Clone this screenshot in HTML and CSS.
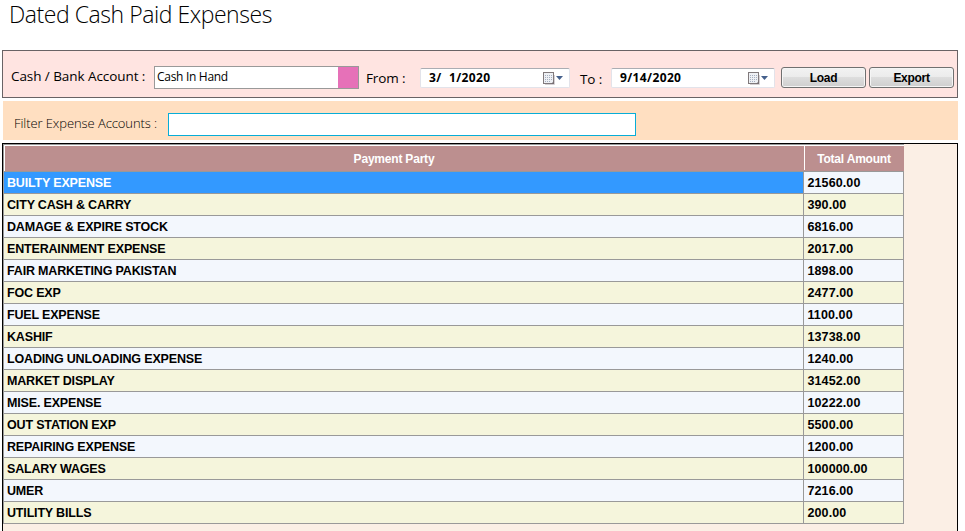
FILE: index.html
```html
<!DOCTYPE html>
<html lang="en">
<head>
<meta charset="utf-8">
<title>Dated Cash Paid Expenses</title>
<link rel="stylesheet" href="styles.css">
</head>
<body>
<h1><span>Dated Cash Paid Expenses</span></h1>
<section class="toolbar">
  <label class="account-label">Cash / Bank Account :</label>
  <div class="combo"><span>Cash In Hand</span><i></i></div>
  <label class="from-label">From :</label>
  <div class="date from"><span class="month">3/</span><span class="rest">1/2020</span>
    <svg width="22" height="14" viewBox="0 0 22 14"><path d="M2 13.500h9.500V4" fill="none" stroke="#d5d1d4"/><rect x=".5" y="1.500" width="10" height="11" fill="#eef0f4" stroke="#80797b"/><path d="M2 4.500h7M2 6.500h7M2 8.500h7M2 10.500h5" stroke="#a5afc0" stroke-dasharray="1 1"/><path d="M8 13l3-3v3z" fill="#777074"/><path d="M13 5h7l-3.500 4z" fill="#45608c"/></svg>
  </div>
  <label class="to-label">To :</label>
  <div class="date to"><span class="whole">9/14/2020</span>
    <svg width="22" height="14" viewBox="0 0 22 14"><path d="M2 13.500h9.500V4" fill="none" stroke="#d5d1d4"/><rect x=".5" y="1.500" width="10" height="11" fill="#eef0f4" stroke="#80797b"/><path d="M2 4.500h7M2 6.500h7M2 8.500h7M2 10.500h5" stroke="#a5afc0" stroke-dasharray="1 1"/><path d="M8 13l3-3v3z" fill="#777074"/><path d="M13 5h7l-3.500 4z" fill="#45608c"/></svg>
  </div>
  <button class="load">Load</button>
  <button class="export">Export</button>
</section>
<section class="filter">
  <label>Filter Expense Accounts :</label>
  <input type="text" aria-label="Filter">
</section>
<section class="grid">
  <div class="table">
    <div class="head"><div><span>Payment Party</span></div><div><span>Total Amount</span></div></div>
    <div class="row selected"><div>BUILTY EXPENSE</div><div>21560.00</div></div>
    <div class="row"><div>CITY CASH &amp; CARRY</div><div>390.00</div></div>
    <div class="row"><div>DAMAGE &amp; EXPIRE STOCK</div><div>6816.00</div></div>
    <div class="row"><div>ENTERAINMENT EXPENSE</div><div>2017.00</div></div>
    <div class="row"><div>FAIR MARKETING PAKISTAN</div><div>1898.00</div></div>
    <div class="row"><div>FOC EXP</div><div>2477.00</div></div>
    <div class="row"><div>FUEL EXPENSE</div><div>1100.00</div></div>
    <div class="row"><div>KASHIF</div><div>13738.00</div></div>
    <div class="row"><div>LOADING UNLOADING EXPENSE</div><div>1240.00</div></div>
    <div class="row"><div>MARKET DISPLAY</div><div>31452.00</div></div>
    <div class="row"><div>MISE. EXPENSE</div><div>10222.00</div></div>
    <div class="row"><div>OUT STATION EXP</div><div>5500.00</div></div>
    <div class="row"><div>REPAIRING EXPENSE</div><div>1200.00</div></div>
    <div class="row"><div>SALARY WAGES</div><div>100000.00</div></div>
    <div class="row"><div>UMER</div><div>7216.00</div></div>
    <div class="row"><div>UTILITY BILLS</div><div>200.00</div></div>
  </div>
</section>
</body>
</html>
```
FILE: styles.css
```css
* { box-sizing: border-box; }
body { margin: 0; width: 965px; height: 531px; overflow: hidden; background: #fff; color: #000; font-family: "Open Sans", sans-serif; display: flex; flex-direction: column; }
h1 { flex: none; margin: 0; height: 50px; padding-left: 9px; font-size: 23px; line-height: 29px; font-weight: 300; white-space: nowrap; letter-spacing: -.45px; }
label { flex: none; white-space: nowrap; }
.toolbar { flex: none; display: flex; align-items: flex-start; width: 956px; height: 48px; margin-left: 2px; border: 1px solid #696365; background: #ffe4e1; font-size: 13.500px; line-height: 20px; }
.account-label { width: 143px; margin-left: 8px; padding-top: 15px; letter-spacing: -.07px; }
.combo { display: flex; justify-content: space-between; width: 205px; height: 23px; margin-top: 15px; border: 1px solid #999; background: #fff; font-size: 12px; line-height: 20px; }
.combo span { padding-left: 2px; letter-spacing: -.3px; }
.combo i { width: 20px; background: #e671b8; }
.from-label { width: 54px; margin-left: 7px; padding-top: 17px; letter-spacing: -.1px; }
.date { display: flex; height: 20px; margin-top: 17px; border: 1px solid #e2e3ea; border-top-color: #abadb3; border-radius: 2px; background: #fff; font: bold 12px/18px "Open Sans", sans-serif; letter-spacing: .38px; }
.date span { white-space: nowrap; }
.date svg { margin: 2px 4px 0 auto; }
.from { width: 150px; }
.to { width: 164px; }
.month { width: 20px; margin-left: 8px; }
.whole { margin-left: 8px; }
.to-label { width: 31px; margin-left: 10px; padding-top: 18px; letter-spacing: -.1px; }
button { width: 85px; height: 21px; margin: 16px 0 0; padding: 1px 0 0; border: 1px solid #707070; border-radius: 3px; background: linear-gradient(#f2f2f2, #ebebeb 50%, #ddd 50%, #cfcfcf); box-shadow: inset 0 0 0 1px #f5f5f5; color: #000; font: bold 12px/18px "Liberation Sans", sans-serif; letter-spacing: -.3px; }
.load { margin-left: 6px; }
.export { margin-left: 3px; }
.filter { flex: none; display: flex; width: 955px; height: 39px; margin: 3px 0 3px 3px; background: #ffdfc1; font-size: 13px; line-height: 20px; }
.filter label { width: 154px; margin-left: 11px; padding-top: 12px; font-weight: 300; letter-spacing: -.08px; }
.filter input { width: 468px; height: 23px; margin: 12px 0 0; padding: 0; border: 1px solid #08add7; background: #fff; }
.grid { flex: 1; width: 956px; margin-left: 2px; border: 1px solid #000; border-bottom: 0; background: #fbefe5; }
.table { width: 901px; border-left: 1px solid #999; border-top: 1px solid #999; font: bold 12.500px/22px "Liberation Sans", sans-serif; }
.head, .row { display: grid; grid-template-columns: 799px 101px; }
.head { height: 27px; border-bottom: 1px solid #999; background: #bc8f8f; box-shadow: inset 1px 1px #fff; color: #fff; font: bold 12px/28px "Liberation Sans", sans-serif; text-align: center; letter-spacing: -.2px; }
.head div:first-child { padding-right: 19px; }
.head div + div { height: 24px; margin: 1px 0 0 1px; border-left: 1px solid #fff; padding-right: 1px; line-height: 26px; }
.row { height: 22px; background: #f3f7fd; }
.row:nth-child(odd) { background: #f5f5dc; }
.row div { height: 22px; border-bottom: 1px solid #999; padding-left: 3px; white-space: nowrap; letter-spacing: -.17px; }
.row div + div { border-left: 1px solid #999; border-right: 1px solid #999; padding-left: 3.500px; letter-spacing: .1px; }
.row.selected div:first-child { background: #3399ff; color: #fff; }
```
